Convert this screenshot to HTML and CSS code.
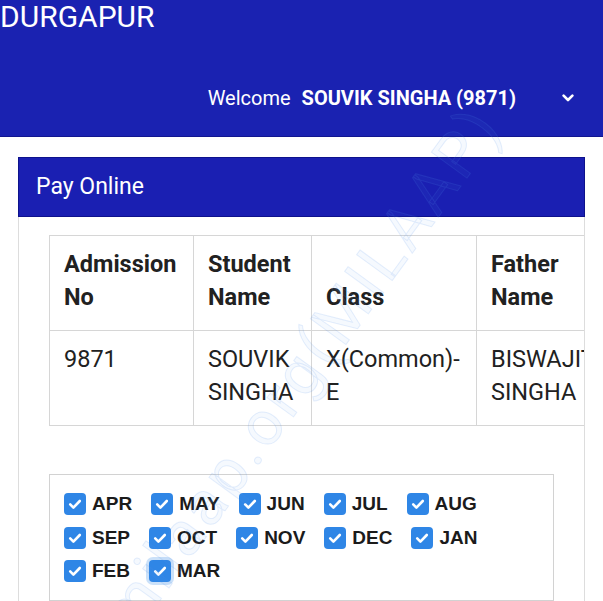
FILE: index.html
```html
<!DOCTYPE html>
<html lang="en">
<head>
  <meta charset="UTF-8" />
  <meta name="viewport" content="width=device-width, initial-scale=1.0" />
  <title>Pay Online - Durgapur</title>
  <link rel="stylesheet" href="styles.css">
</head>
<body>
  <header class="topbar">
    <div class="brand">DURGAPUR</div>
    <div class="user">
      <span class="welcome">Welcome</span>
      <b class="user-name">SOUVIK SINGHA (9871)</b>
      <svg class="chevron" width="12" height="8" viewBox="0 0 12 8"><path d="M1.6 1.6L6 6l4.4-4.4" fill="none" stroke="#fff" stroke-width="2.6" stroke-linecap="round" stroke-linejoin="round"/></svg>
    </div>
  </header>

  <main class="content">
    <div class="panel">
      <div class="panel-heading">Pay Online</div>
      <div class="panel-body">
        <div class="table-wrap">
          <table class="student-table">
            <colgroup>
              <col style="width:144px">
              <col style="width:118px">
              <col style="width:165px">
              <col style="width:150px">
              <col style="width:150px">
            </colgroup>
            <thead>
              <tr>
                <th>Admission No</th>
                <th>Student Name</th>
                <th>Class</th>
                <th>Father Name</th>
                <th>Mother Name</th>
              </tr>
            </thead>
            <tbody>
              <tr>
                <td>9871</td>
                <td>SOUVIK SINGHA</td>
                <td>X(Common)-E</td>
                <td>BISWAJIT SINGHA</td>
                <td>-</td>
              </tr>
            </tbody>
          </table>
        </div>

        <div class="months">
          <label class="month"><span class="check"><svg width="22" height="22" viewBox="0 0 22 22"><path d="M6.2 11.4l3.2 3.2 6.4-6.6"/></svg></span>APR</label>
          <label class="month"><span class="check"><svg width="22" height="22" viewBox="0 0 22 22"><path d="M6.2 11.4l3.2 3.2 6.4-6.6"/></svg></span>MAY</label>
          <label class="month"><span class="check"><svg width="22" height="22" viewBox="0 0 22 22"><path d="M6.2 11.4l3.2 3.2 6.4-6.6"/></svg></span>JUN</label>
          <label class="month"><span class="check"><svg width="22" height="22" viewBox="0 0 22 22"><path d="M6.2 11.4l3.2 3.2 6.4-6.6"/></svg></span>JUL</label>
          <label class="month"><span class="check"><svg width="22" height="22" viewBox="0 0 22 22"><path d="M6.2 11.4l3.2 3.2 6.4-6.6"/></svg></span>AUG</label>
          <label class="month"><span class="check"><svg width="22" height="22" viewBox="0 0 22 22"><path d="M6.2 11.4l3.2 3.2 6.4-6.6"/></svg></span>SEP</label>
          <label class="month"><span class="check"><svg width="22" height="22" viewBox="0 0 22 22"><path d="M6.2 11.4l3.2 3.2 6.4-6.6"/></svg></span>OCT</label>
          <label class="month"><span class="check"><svg width="22" height="22" viewBox="0 0 22 22"><path d="M6.2 11.4l3.2 3.2 6.4-6.6"/></svg></span>NOV</label>
          <label class="month"><span class="check"><svg width="22" height="22" viewBox="0 0 22 22"><path d="M6.2 11.4l3.2 3.2 6.4-6.6"/></svg></span>DEC</label>
          <label class="month"><span class="check"><svg width="22" height="22" viewBox="0 0 22 22"><path d="M6.2 11.4l3.2 3.2 6.4-6.6"/></svg></span>JAN</label>
          <label class="month"><span class="check"><svg width="22" height="22" viewBox="0 0 22 22"><path d="M6.2 11.4l3.2 3.2 6.4-6.6"/></svg></span>FEB</label>
          <label class="month"><span class="check focused"><svg width="22" height="22" viewBox="0 0 22 22"><path d="M6.2 11.4l3.2 3.2 6.4-6.6"/></svg></span>MAR</label>
        </div>
      </div>
    </div>
  </main>

  <div class="watermark">milaap.org(MILAAP)</div>
</body>
</html>
```

FILE: styles.css
```css
body {
  margin: 0;
  font-family: Roboto, 'Noto Sans', sans-serif;
  background: #fff;
  color: #222;
  overflow: hidden;
}
.topbar {
  height: 136px;
  background: #1a22b1;
  border-bottom: 1px solid #11168f;
  color: #fff;
}
.brand {
  font-size: 30px;
  line-height: 34px;
}
.user {
  display: flex;
  align-items: center;
  justify-content: flex-end;
  margin-top: 52px;
  padding-right: 29px;
  font-size: 20px;
  line-height: 24px;
}
.welcome {
  margin-right: 11px;
}
.user-name {
  font-weight: 700;
}
.chevron {
  margin-left: 46px;
}
.content {
  padding: 20px 18px 0 18px;
}
.panel-heading {
  height: 58px;
  line-height: 58px;
  background: #1a1fb2;
  border: 1px solid #0e128c;
  color: #fff;
  font-size: 23px;
  padding-left: 17px;
}
.panel-body {
  border: 1px solid #ddd;
  border-top: 0;
  padding: 18px 30px 40px 30px;
  overflow: hidden;
  height: 400px;
}
.student-table {
  border-collapse: collapse;
  table-layout: fixed;
  width: 727px;
  font-size: 23.5px;
  line-height: 33px;
  color: #212121;
}
.student-table th,
.student-table td {
  border: 1px solid #d6d6d6;
  padding: 12px 14px 16px 14px;
  text-align: left;
}
.student-table th {
  vertical-align: bottom;
  font-weight: 700;
}
.student-table td {
  vertical-align: top;
}
.months {
  margin-top: 48px;
  border: 1px solid #d2d2d2;
  padding: 18px 14px;
  display: flex;
  flex-wrap: wrap;
  column-gap: 19px;
  row-gap: 11.5px;
  font-family: 'Liberation Sans', Arial, sans-serif;
  font-weight: 700;
  font-size: 19px;
  color: #1b1b1b;
}
.month {
  display: inline-flex;
  align-items: center;
  gap: 6px;
  height: 22px;
}
.check {
  width: 22px;
  height: 22px;
  border-radius: 4px;
  background: #2f86e6;
  display: inline-flex;
}
.check path {
  fill: none;
  stroke: #fff;
  stroke-width: 2.6;
  stroke-linecap: round;
  stroke-linejoin: round;
}
.check.focused {
  box-shadow: 0 0 0 3px rgba(47, 134, 230, 0.25);
}
.watermark {
  position: absolute;
  left: 85px;
  top: 605px;
  transform-origin: 0 0;
  transform: rotate(-54deg);
  font-family: Roboto, sans-serif;
  font-size: 62px;
  letter-spacing: 4px;
  white-space: nowrap;
  color: rgba(90, 150, 235, 0.06);
  -webkit-text-stroke: 1px rgba(90, 150, 235, 0.15);
  pointer-events: none;
}
```
